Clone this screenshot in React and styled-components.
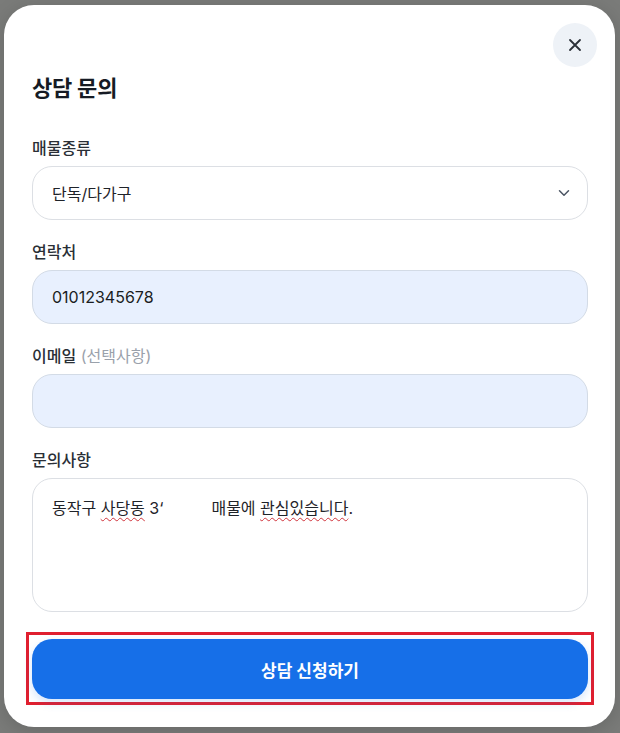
import styled, { createGlobalStyle } from "styled-components";

const GlobalStyle = createGlobalStyle`
  * { box-sizing: border-box; }
  html, body { margin: 0; padding: 0; }
  body {
    background: #7a7b79;
    font-family: "Inter", "Noto Sans CJK KR", sans-serif;
    color: #1f2329;
  }
`;

const fields = [
  { label: "연락처", value: "01012345678", filled: true },
  { label: "이메일", hint: "(선택사항)", value: "", filled: true },
];

const ChevronDown = () => (
  <svg width="18" height="18" viewBox="0 0 24 24" fill="none" stroke="#4b5563" strokeWidth="2" strokeLinecap="round" strokeLinejoin="round">
    <path d="M6 9l6 6 6-6" />
  </svg>
);

const CloseIcon = () => (
  <svg width="20" height="20" viewBox="0 0 24 24" fill="none" stroke="#2b3038" strokeWidth="2.2" strokeLinecap="round">
    <path d="M6 6l12 12M18 6L6 18" />
  </svg>
);

const App = () => {
  return (
    <>
      <GlobalStyle />
      <Backdrop>
        <Modal>
          <CloseButton aria-label="닫기">
            <CloseIcon />
          </CloseButton>
          <Title>상담 문의</Title>

          <Field>
            <Label>매물종류</Label>
            <Select>
              <span>단독/다가구</span>
              <ChevronDown />
            </Select>
          </Field>

          {fields.map(({ label, hint, value, filled }) => (
            <Field key={label}>
              <Label>
                {label}
                {hint && <Hint> {hint}</Hint>}
              </Label>
              <Input $filled={filled}>{value}</Input>
            </Field>
          ))}

          <Field>
            <Label>문의사항</Label>
            <TextArea>
              동작구 <Misspelt>사당동</Misspelt> 3‘
              <Gap />
              매물에 <Misspelt>관심있습니다</Misspelt>.
            </TextArea>
          </Field>

          <Highlight>
            <SubmitButton>상담 신청하기</SubmitButton>
          </Highlight>
        </Modal>
      </Backdrop>
    </>
  );
};

const Backdrop = styled.div`
  height: 733px;
  padding: 5px 5px 6px 4px;
`;

const Modal = styled.div`
  position: relative;
  height: 722px;
  background: #fff;
  border-radius: 30px;
  padding: 68px 27px 0 28px;
  box-shadow: 0 4px 20px rgba(0, 0, 0, 0.15);
`;

const CloseButton = styled.button`
  position: absolute;
  top: 18px;
  right: 18px;
  width: 44px;
  height: 44px;
  border: none;
  border-radius: 50%;
  background: #eef2f7;
  display: flex;
  align-items: center;
  justify-content: center;
  padding: 0;
`;

const Title = styled.h2`
  margin: 0 0 33px;
  font-size: 22px;
  line-height: 30px;
  font-weight: 700;
  color: #161b24;
  letter-spacing: -0.2px;
`;

const Field = styled.div`
  display: flex;
  flex-direction: column;
  gap: 6px;
  margin-bottom: 20px;
`;

const Label = styled.div`
  font-size: 16px;
  line-height: 24px;
  font-weight: 500;
  color: #2a2f36;
`;

const Hint = styled.span`
  color: #9aa1ab;
  font-weight: 400;
`;

const Select = styled.div`
  height: 54px;
  border: 1px solid #dcdfe4;
  border-radius: 20px;
  padding: 0 14px 0 19px;
  display: flex;
  align-items: center;
  justify-content: space-between;
  font-size: 16px;
  color: #1f2329;
`;

const Input = styled.div`
  height: 54px;
  border: 1px solid ${(p) => (p.$filled ? "#d3dbe6" : "#dcdfe4")};
  border-radius: 20px;
  background: ${(p) => (p.$filled ? "#e8f0fe" : "#fff")};
  padding: 0 19px;
  display: flex;
  align-items: center;
  font-size: 16px;
  color: #1a1d22;
`;

const TextArea = styled.div`
  height: 134px;
  border: 1px solid #dcdfe4;
  border-radius: 20px;
  padding: 17px 19px;
  font-size: 16px;
  line-height: 24px;
  color: #1f2329;
  white-space: nowrap;
`;

const Misspelt = styled.span`
  text-decoration: underline wavy #d0343c;
  text-decoration-thickness: 1px;
  text-underline-offset: 3px;
`;

const Gap = styled.span`
  display: inline-block;
  width: 48px;
`;

const Highlight = styled.div`
  margin: 1px -6px 0 -6px;
  padding: 4px 3px 3px;
  border: 3px solid #e01f2f;
`;

const SubmitButton = styled.button`
  width: 100%;
  height: 60px;
  border: none;
  border-radius: 20px;
  background: #166fe8;
  color: #fff;
  font-family: inherit;
  font-size: 17px;
  font-weight: 700;
  box-shadow: 0 4px 10px rgba(22, 111, 232, 0.18);
`;

export default App;
